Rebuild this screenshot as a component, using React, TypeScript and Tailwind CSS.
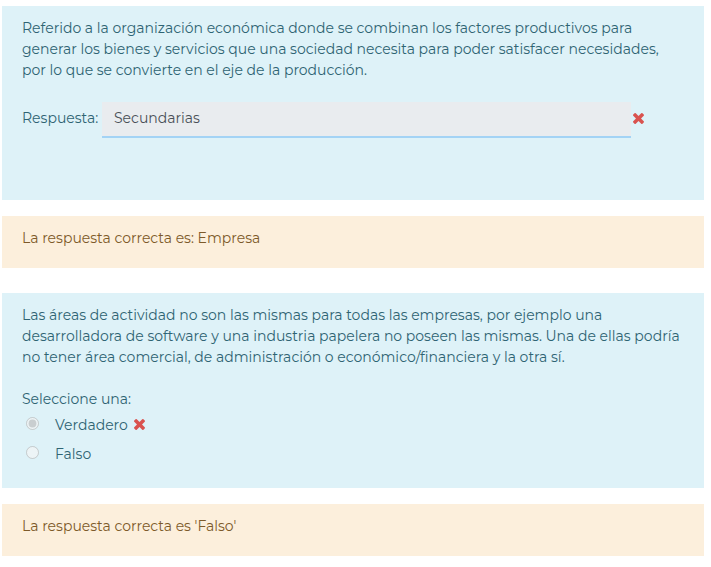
import type { ReactNode } from "react";

function WrongMark({ className = "" }: { className?: string }) {
  return (
    <svg
      role="img"
      aria-label="Incorrecta"
      viewBox="110 366 1188 1188"
      className={`size-[11px] shrink-0 fill-[#d9534f] ${className}`}
    >
      <path d="M1298 1322q0 40-28 68l-136 136q-28 28-68 28t-68-28l-294-294-294 294q-28 28-68 28t-68-28l-136-136q-28-28-28-68t28-68l294-294-294-294q-28-28-28-68t28-68l136-136q28-28 68-28t68 28l294 294 294-294q28-28 68-28t68 28l136 136q28 28 28 68t-28 68l-294 294 294 294q28 28 28 68z" />
    </svg>
  );
}

function Question({ children }: { children: ReactNode }) {
  return <section className="bg-[#def2f8] px-5 pt-3 text-[#2f6473]">{children}</section>;
}

function Feedback({ children }: { children: ReactNode }) {
  return (
    <div className="mt-4 bg-[#fcefdc] px-5 pt-3 pb-[19px] text-[#7d5a29]">
      <p>{children}</p>
    </div>
  );
}

export default function App() {
  return (
    <main className="min-h-screen bg-white py-1.5 pr-[7px] pl-0.5 font-['Montserrat','Open_Sans',sans-serif] text-[14px] leading-[21px]">
      <Question>
        <p>
          Referido a la organización económica donde se combinan los factores productivos para
          generar los bienes y servicios que una sociedad necesita para poder satisfacer necesidades,
          por lo que se convierte en el eje de la producción.
        </p>
        <div className="flex items-center pt-[21px] pb-[62px]">
          <label htmlFor="respuesta" className="w-20 shrink-0 pb-1">
            Respuesta:
          </label>
          <input
            id="respuesta"
            readOnly
            defaultValue="Secundarias"
            className="h-9 w-full max-w-[529px] min-w-0 border-b-2 border-[#a3d3f5] bg-[#e9ecef] px-3 pb-0.5 text-[#495057] outline-none"
          />
          <WrongMark className="mb-1 ml-0.5" />
        </div>
      </Question>
      <Feedback>La respuesta correcta es: Empresa</Feedback>
      <div className="mt-[25px]">
        <Question>
          <p>
            Las áreas de actividad no son las mismas para todas las empresas, por ejemplo una
            desarrolladora de software y una industria papelera no poseen las mismas. Una de ellas podría
            no tener área comercial, de administración o económico/financiera y la otra sí.
          </p>
          <fieldset className="pt-[21px] pb-[23px]">
            <legend className="float-left w-full">Seleccione una:</legend>
            <div className="clear-both flex flex-col gap-2 pt-[5px]">
              <label className="flex items-center">
                <input type="radio" name="opcion" disabled defaultChecked className="mr-4 mb-1 ml-1 size-[13px]" />
                Verdadero
                <WrongMark className="mb-0.5 ml-1.5" />
              </label>
              <label className="flex items-center">
                <input type="radio" name="opcion" disabled className="mr-4 mb-1 ml-1 size-[13px]" />
                Falso
              </label>
            </div>
          </fieldset>
        </Question>
      </div>
      <Feedback>La respuesta correcta es 'Falso'</Feedback>
    </main>
  );
}
